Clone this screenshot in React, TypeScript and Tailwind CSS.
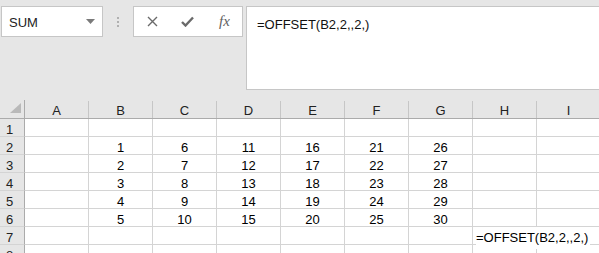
import { useState } from 'react'

const cols = ['A', 'B', 'C', 'D', 'E', 'F', 'G', 'H', 'I']

const data: Record<number, (string | number)[]> = {
  2: ['', 1, 6, 11, 16, 21, 26, '', ''],
  3: ['', 2, 7, 12, 17, 22, 27, '', ''],
  4: ['', 3, 8, 13, 18, 23, 28, '', ''],
  5: ['', 4, 9, 14, 19, 24, 29, '', ''],
  6: ['', 5, 10, 15, 20, 25, 30, '', ''],
}

const FORMULA = '=OFFSET(B2,2,,2,)'

function Toolbar() {
  const [formula] = useState(FORMULA)

  return (
    <div className="flex h-[100px] items-start pt-[6px] pl-[1px]">
      {/* Name box */}
      <div className="flex h-[31px] w-[102px] items-start justify-between border border-[#c6c6c6] bg-white pl-[7px] pr-[7px]">
        <span className="pt-[2px] text-[13px] leading-[27px] text-[#222]">SUM</span>
        <svg className="mt-[12px]" width="9" height="5" viewBox="0 0 9 5">
          <path d="M0 0h9L4.5 5z" fill="#7a7a7a" />
        </svg>
      </div>

      {/* Grip dots */}
      <div className="ml-[14px] mt-[11px] flex flex-col gap-[2px]">
        <span className="h-[2px] w-[2px] bg-[#b0b0b0]" />
        <span className="h-[2px] w-[2px] bg-[#b0b0b0]" />
        <span className="h-[2px] w-[2px] bg-[#b0b0b0]" />
      </div>

      {/* Cancel / enter / insert function */}
      <div className="ml-[14px] flex h-[31px] w-[110px] items-center border border-[#c6c6c6] bg-white">
        <svg className="ml-[13px]" width="11" height="11" viewBox="0 0 11 11">
          <path d="M1 1l9 9M10 1l-9 9" stroke="#6a6a6a" strokeWidth="1.4" />
        </svg>
        <svg className="ml-[23px]" width="13" height="11" viewBox="0 0 13 11">
          <path d="M1 6l3.5 3.5L12 1.5" stroke="#6a6a6a" strokeWidth="2.4" fill="none" />
        </svg>
        <span
          className="ml-[25px] text-[15px] italic leading-none text-[#5f5f5f]"
          style={{ fontFamily: '"Liberation Serif", serif' }}
        >
          fx
        </span>
      </div>

      {/* Formula bar */}
      <div className="ml-[3px] h-[84px] flex-1 border border-r-0 border-[#c6c6c6] bg-white pl-[10px] pt-[5px]">
        <span className="text-[13px] leading-[20px] text-[#111]">{formula}</span>
      </div>
    </div>
  )
}

function HeaderRow() {
  return (
    <div className="flex h-[19px] border-b border-[#ababab]">
      <div className="relative w-[25px] shrink-0 border-r border-[#ababab]">
        <svg className="absolute left-[10px] top-[3px]" width="11" height="10" viewBox="0 0 11 10">
          <path d="M11 0v10H0z" fill="#b9b9b9" />
        </svg>
      </div>
      {cols.map((c) => (
        <div
          key={c}
          className="mt-[1px] h-[17px] w-[64px] shrink-0 border-r border-[#c6c6c6] text-center text-[13px] leading-[20px] text-[#222]"
        >
          {c}
        </div>
      ))}
    </div>
  )
}

function Row({ n }: { n: number }) {
  const values = data[n] ?? cols.map(() => '')

  return (
    <div className="flex h-[18px]">
      <div className="w-[25px] shrink-0 border-r border-b border-r-[#ababab] border-b-[#d4d4d4] pl-[6px] text-[13px] leading-[22px] text-[#222]">
        {n}
      </div>
      {cols.map((c, i) => (
        <div
          key={c}
          className="relative w-[64px] shrink-0 border-r border-b border-[#d4d4d4] bg-white text-center text-[13px] leading-[22px] text-black"
        >
          {values[i]}
          {n === 7 && c === 'H' && (
            <span className="absolute left-[3px] top-0 z-10 whitespace-nowrap bg-white pr-[2px]">
              {FORMULA}
            </span>
          )}
        </div>
      ))}
    </div>
  )
}

export default function App() {
  return (
    <div
      className="h-[253px] w-[599px] overflow-hidden bg-[#e6e6e6]"
      style={{ fontFamily: '"Liberation Sans", Arial, sans-serif' }}
    >
      <Toolbar />
      <HeaderRow />
      {[1, 2, 3, 4, 5, 6, 7, 8].map((n) => (
        <Row key={n} n={n} />
      ))}
    </div>
  )
}
